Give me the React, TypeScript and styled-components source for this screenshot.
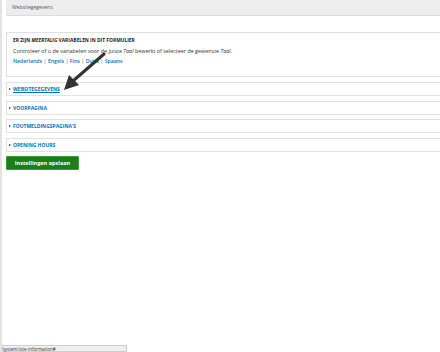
import styled, { createGlobalStyle } from 'styled-components';

const GlobalStyle = createGlobalStyle`
  html, body {
    margin: 0;
    padding: 0;
    background: #ffffff;
    overflow: hidden;
  }
  body {
    font-family: "Open Sans", "DejaVu Sans", sans-serif;
    color: #333333;
  }
`;

const sections = ['WEBSITEGEGEVENS', 'VOORPAGINA', "FOUTMELDINGSPAGINA'S", 'OPENING HOURS'];
const languages = ['Nederlands', 'Engels', 'Fins', 'Duits', 'Spaans'];

export default function App() {
  return (
    <Page>
      <GlobalStyle />
      <Content>
        <Header>Websitegegevens</Header>
        <Notice>
          <NoticeTitle>
            ER ZIJN <em>MEERTALIG</em> VARIABELEN IN DIT FORMULIER
          </NoticeTitle>
          <NoticeText>
            Controleer of u de variabelen voor de juiste <em>Taal</em> bewerkt of selecteer de gewenste{' '}
            <em>Taal</em>.
          </NoticeText>
          <LangList>
            {languages.map((lang, i) => (
              <span key={lang}>
                {i > 0 && <Sep>|</Sep>}
                <LangLink href="#">{lang}</LangLink>
              </span>
            ))}
          </LangList>
        </Notice>
        <Sections>
          {sections.map((s, i) => (
            <Details key={s}>
              <Bullet />
              <SummaryLink href="#" $active={i === 0}>
                {s}
              </SummaryLink>
            </Details>
          ))}
        </Sections>
        <SaveButton>Instellingen opslaan</SaveButton>
      </Content>
      <Arrow width="48" height="44" viewBox="0 0 48 44">
        <line x1="45" y1="2" x2="14" y2="29" stroke="#333" strokeWidth="3" strokeLinecap="round" />
        <polygon points="5,38 10,23 20,33" fill="#333" />
      </Arrow>
      <StatusBar>/system/site-information#</StatusBar>
    </Page>
  );
}

const Page = styled.div`
  position: relative;
  width: 440px;
  height: 352px;
  overflow: hidden;
  border-left: 2px solid #e3e3e3;
  box-sizing: border-box;
`;

const Content = styled.div`
  width: 480px;
  padding-left: 4px;
  display: flex;
  flex-direction: column;
`;

const Header = styled.div`
  height: 15px;
  background: #ededed;
  border-bottom: 1px solid #dcdcdc;
  font-size: 5px;
  line-height: 15px;
  padding-left: 6px;
  color: #555;
`;

const Notice = styled.div`
  margin-top: 16px;
  border: 1px solid #e0e0e0;
  height: 41px;
  padding: 2px 6px 0;
  box-sizing: content-box;
  font-size: 5.4px;
  line-height: 10.5px;
`;

const NoticeTitle = styled.div`
  font-size: 4.9px;
  font-weight: 700;
  color: #222;
  em {
    font-style: italic;
  }
`;

const NoticeText = styled.div`
  color: #333;
`;

const LangList = styled.div`
  color: #555;
  font-size: 5.2px;
`;

const Sep = styled.span`
  margin: 0 1.5px;
`;

const LangLink = styled.a`
  color: #0074bd;
  font-weight: 600;
  text-decoration: none;
`;

const Sections = styled.div`
  margin-top: 5px;
  display: flex;
  flex-direction: column;
  gap: 4.5px;
`;

const Details = styled.div`
  height: 12px;
  border: 1px solid #e2e2e2;
  display: flex;
  align-items: center;
  padding-left: 2px;
`;

const Bullet = styled.span`
  width: 0;
  height: 0;
  border-top: 1.5px solid transparent;
  border-bottom: 1.5px solid transparent;
  border-left: 2px solid #333;
  margin-right: 2px;
`;

const SummaryLink = styled.a<{ $active?: boolean }>`
  font-size: 5px;
  font-weight: 700;
  color: #0074bd;
  text-decoration: ${(p) => (p.$active ? 'underline' : 'none')};
`;

const SaveButton = styled.button`
  margin-top: 4px;
  align-self: flex-start;
  width: 73px;
  height: 14px;
  padding: 0;
  background: #1a7f1a;
  border: 1px solid #3a9a3a;
  border-radius: 1px;
  color: #ffffff;
  font-family: "Open Sans", sans-serif;
  font-size: 5.5px;
  font-weight: 700;
`;

const Arrow = styled.svg`
  position: absolute;
  left: 57px;
  top: 52px;
`;

const StatusBar = styled.div`
  position: absolute;
  left: -2px;
  bottom: 0;
  width: 127px;
  height: 7px;
  background: #efefef;
  border: 1px solid #cfcfcf;
  border-left: none;
  box-sizing: border-box;
  font-size: 4.5px;
  line-height: 6px;
  padding-left: 1px;
  color: #333;
`;
